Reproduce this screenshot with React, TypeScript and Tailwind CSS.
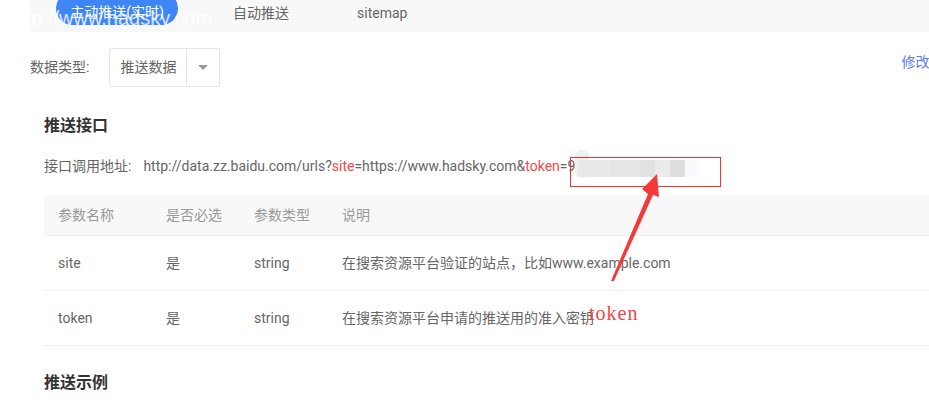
const font = "font-['Roboto','Noto_Sans_CJK_SC',sans-serif]";

const rows = [
  { name: "site", req: "是", type: "string", desc: "在搜索资源平台验证的站点，比如www.example.com" },
  { name: "token", req: "是", type: "string", desc: "在搜索资源平台申请的推送用的准入密钥" },
];

export default function App() {
  return (
    <div className={`relative w-[929px] h-[408px] overflow-hidden bg-white text-[14px] text-[#666] ${font}`}>
      <div className="w-[1000px] pl-[30px]">
        {/* tabs */}
        <div className="flex h-[32px] items-start bg-[#f8f8f8]">
          <div className="ml-[26px] -mt-[8px] flex h-[33px] w-[122px] items-center justify-center rounded-full bg-[#3e86f6] pt-[8px] text-white">
            主动推送(实时)
          </div>
          <div className="ml-[55px] pt-[3px]">自动推送</div>
          <div className="ml-[68px] pt-[3px]">sitemap</div>
        </div>

        {/* data type */}
        <div className="mt-[16px] flex items-center">
          <span>数据类型:</span>
          <div className="ml-[20px] flex h-[39px] w-[111px] items-center rounded-[2px] border border-[#e6e6e6]">
            <span className="w-[76px] pl-[10px]">推送数据</span>
            <div className="flex h-full flex-1 items-center justify-center border-l border-[#e6e6e6]">
              <span className="h-0 w-0 border-x-[5px] border-t-[5px] border-x-transparent border-t-[#999]" />
            </div>
          </div>
          <span className="ml-[681px] -mt-[11px] text-[#5a7bfa]">修改</span>
        </div>

        <div className="pl-[14px]">
          <h2 className="mt-[27px] text-[16px] font-bold text-[#333]">推送接口</h2>

          <div className="mt-[18px] flex">
            <span>接口调用地址:</span>
            <span className="ml-[12px]">
              http://data.zz.baidu.com/urls?<span className="text-[#f5484a]">site</span>=https://www.hadsky.com&amp;
              <span className="text-[#f5484a]">token</span>=9
            </span>
          </div>

          {/* table */}
          <div className="mt-[18px]">
            <div className="flex h-[41px] items-center border-b border-[#eee] bg-[#f8f8f8] text-[#999]">
              <span className="w-[122px] pl-[14px]">参数名称</span>
              <span className="w-[88px]">是否必选</span>
              <span className="w-[88px]">参数类型</span>
              <span>说明</span>
            </div>
            {rows.map((r) => (
              <div key={r.name} className="flex h-[55px] items-center border-b border-[#eee]">
                <span className="w-[122px] pl-[14px]">{r.name}</span>
                <span className="w-[88px]">{r.req}</span>
                <span className="w-[88px]">{r.type}</span>
                <span>{r.desc}</span>
              </div>
            ))}
          </div>

          <h2 className="mt-[25px] text-[16px] font-bold text-[#333]">推送示例</h2>
        </div>
      </div>

      {/* watermark */}
      <div className="pointer-events-none absolute left-[9px] top-[3px] font-['Liberation_Sans',sans-serif] text-[20px] text-white/80">
        http://www.hadsky.com
      </div>

      {/* blurred token + annotation */}
      <div className="absolute left-[575px] top-[150px] h-[28px] w-[14px] rounded-full bg-[#f0f0f0]" />
      <div className="absolute left-[578px] top-[160px] flex h-[17px] blur-[0.5px]">
        <div className="w-[32px] bg-[#e9e9e9]" />
        <div className="w-[30px] bg-[#e6e6e6]" />
        <div className="w-[15px] bg-[#e1e1e1]" />
        <div className="w-[15px] bg-[#ebebeb]" />
        <div className="w-[15px] bg-[#dedede]" />
        <div className="w-[14px] bg-[#f7f9fd]" />
      </div>
      <div className="absolute left-[570px] top-[157px] h-[30px] w-[151px] border border-[#ee3333]" />
      <svg className="absolute left-0 top-0" width="929" height="408">
        <polygon points="611,281 648,194 642,189 657,174 659,197 653,195 614,281" fill="#f23a3a" />
      </svg>
      <div className="absolute left-[589px] top-[298px] font-['Liberation_Serif',serif] text-[20px] tracking-[1px] text-[#f0484a]">
        token
      </div>
    </div>
  );
}
